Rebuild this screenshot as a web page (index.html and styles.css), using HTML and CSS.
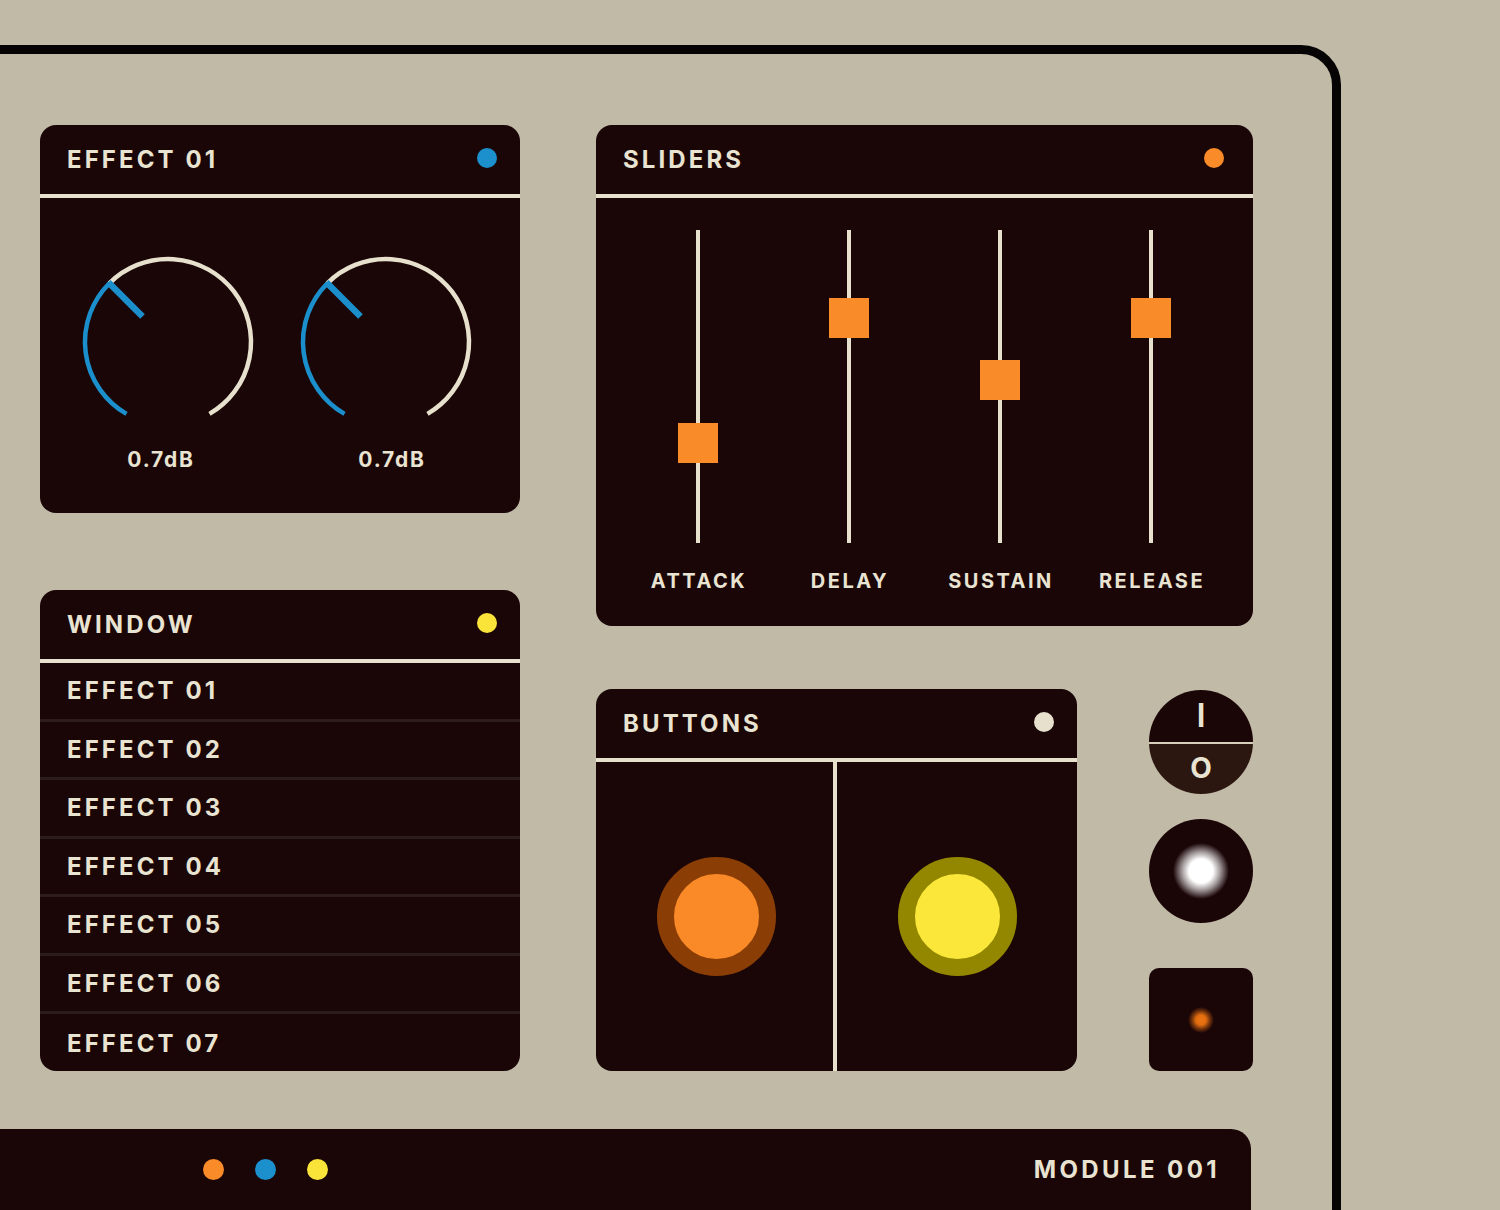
FILE: index.html
```html
<!DOCTYPE html>
<html lang="en">
<head>
<meta charset="utf-8">
<title>Module 001</title>
<link rel="stylesheet" href="styles.css">
</head>
<body>
<div class="frame">
  <div class="board">
    <div class="col col-left">
      <section class="panel panel-effect">
        <header class="panel-head"><h2 class="panel-title">EFFECT 01</h2><span class="dot dot-blue"></span></header>
        <div class="knobs">
          <div class="knob">
            <svg class="knob-svg" width="180" height="180" viewBox="0 0 180 180">
              <path d="M31.31 31.31 A83 83 0 1 1 131.5 161.88" fill="none" stroke="#e6e0cd" stroke-width="4.5"/>
              <path d="M48.5 161.88 A83 83 0 0 1 31.31 31.31" fill="none" stroke="#1a8fcb" stroke-width="4.5"/>
              <line x1="30.3" y1="30.3" x2="64.5" y2="64.5" stroke="#1a8fcb" stroke-width="6.5"/>
            </svg>
            <div class="knob-label label-left">0.7dB</div>
          </div>
          <div class="knob">
            <svg class="knob-svg" width="180" height="180" viewBox="0 0 180 180">
              <path d="M31.31 31.31 A83 83 0 1 1 131.5 161.88" fill="none" stroke="#e6e0cd" stroke-width="4.5"/>
              <path d="M48.5 161.88 A83 83 0 0 1 31.31 31.31" fill="none" stroke="#1a8fcb" stroke-width="4.5"/>
              <line x1="30.3" y1="30.3" x2="64.5" y2="64.5" stroke="#1a8fcb" stroke-width="6.5"/>
            </svg>
            <div class="knob-label label-right">0.7dB</div>
          </div>
        </div>
      </section>
      <section class="panel panel-window">
        <header class="panel-head"><h2 class="panel-title">WINDOW</h2><span class="dot dot-yellow"></span></header>
        <ul class="list">
          <li class="list-item">EFFECT 01</li>
          <li class="list-item">EFFECT 02</li>
          <li class="list-item">EFFECT 03</li>
          <li class="list-item">EFFECT 04</li>
          <li class="list-item">EFFECT 05</li>
          <li class="list-item">EFFECT 06</li>
          <li class="list-item">EFFECT 07</li>
        </ul>
      </section>
    </div>
    <div class="col col-right">
      <section class="panel panel-sliders">
        <header class="panel-head head-sliders"><h2 class="panel-title">SLIDERS</h2><span class="dot dot-orange"></span></header>
        <div class="sliders">
          <div class="slider">
            <div class="track"><span class="thumb" style="top:193px"></span></div>
            <div class="slider-label">ATTACK</div>
          </div>
          <div class="slider">
            <div class="track"><span class="thumb" style="top:68px"></span></div>
            <div class="slider-label">DELAY</div>
          </div>
          <div class="slider">
            <div class="track"><span class="thumb" style="top:130px"></span></div>
            <div class="slider-label">SUSTAIN</div>
          </div>
          <div class="slider">
            <div class="track"><span class="thumb" style="top:68px"></span></div>
            <div class="slider-label">RELEASE</div>
          </div>
        </div>
      </section>
      <div class="lower-row">
        <section class="panel panel-buttons">
          <header class="panel-head"><h2 class="panel-title">BUTTONS</h2><span class="dot dot-cream"></span></header>
          <div class="buttons">
            <div class="btn-cell cell-left"><span class="btn btn-orange"></span></div>
            <div class="btn-divider"></div>
            <div class="btn-cell cell-right"><span class="btn btn-yellow"></span></div>
          </div>
        </section>
        <div class="controls">
          <div class="switch">
            <div class="switch-half switch-on">I</div>
            <div class="switch-half switch-off">O</div>
          </div>
          <div class="glow"></div>
          <div class="led-square"></div>
        </div>
      </div>
    </div>
  </div>
  <footer class="bottombar">
    <div class="bar-dots">
      <span class="dot dot-orange bar-dot"></span>
      <span class="dot dot-blue bar-dot"></span>
      <span class="dot dot-yellow bar-dot"></span>
    </div>
    <div class="bar-title">MODULE 001</div>
  </footer>
</div>
</body>
</html>
```

FILE: styles.css
```css
* { box-sizing: border-box; }
html, body {
  margin: 0;
  padding: 0;
  background: #c0baa7;
  width: 1500px;
  height: 1210px;
  overflow: hidden;
  font-family: Inter, "Noto Sans", "Liberation Sans", sans-serif;
  color: #e9e3d1;
}
.frame {
  margin-top: 45px;
  margin-left: -60px;
  width: 1401px;
  height: 1300px;
  border: 9px solid #050303;
  border-radius: 40px;
}
.board {
  display: flex;
  gap: 76px;
  padding: 71px 0 0 91px;
}
.col { display: flex; flex-direction: column; }
.col-left { width: 480px; gap: 77px; }
.col-right { width: 657px; gap: 63px; }

.panel {
  background: #1a0507;
  border-radius: 16px;
  overflow: hidden;
}
.panel-head {
  height: 73px;
  border-bottom: 4px solid #e6e0cd;
  display: flex;
  align-items: center;
  justify-content: space-between;
  padding: 0 23px 0 27px;
}
.head-sliders { padding-right: 29px; }
.panel-title {
  margin: 0;
  font-size: 24px;
  font-weight: 700;
  letter-spacing: 3.1px;
  line-height: 28px;
}
.dot {
  display: block;
  width: 20px;
  height: 20px;
  border-radius: 50%;
}
.panel-head .dot { margin-bottom: 4px; }
.dot-blue { background: #1b90cd; }
.dot-yellow { background: #fbe43a; }
.dot-orange { background: #f98b28; }
.dot-cream { background: #e6e0cd; }

.panel-effect { height: 388px; }
.knobs {
  display: flex;
  gap: 38px;
  padding: 54px 0 0 38px;
}
.knob { width: 180px; display: flex; flex-direction: column; align-items: center; }
.knob-svg { display: block; }
.knob-label {
  margin-top: 16px;
  font-size: 21px;
  font-weight: 700;
  letter-spacing: 1.8px;
  line-height: 24px;
}
.label-left { padding-right: 14px; }
.label-right { padding-left: 12px; }

.panel-window { height: 481px; }
.list { list-style: none; margin: 0; padding: 0; }
.list-item {
  height: 58.5px;
  border-bottom: 3px solid #2d1c1d;
  display: flex;
  align-items: center;
  padding: 0 27px;
  font-size: 24px;
  font-weight: 700;
  letter-spacing: 3.1px;
}
.list-item:last-child { border-bottom: none; }

.panel-sliders { height: 501px; }
.sliders {
  display: flex;
  padding: 32px 26.5px 0;
}
.slider {
  width: 151px;
  display: flex;
  flex-direction: column;
  align-items: center;
}
.track {
  position: relative;
  width: 4px;
  height: 313px;
  background: #e6e0cd;
}
.thumb {
  position: absolute;
  left: -18px;
  width: 40px;
  height: 40px;
  background: #f98b28;
}
.slider-label {
  margin-top: 26px;
  font-size: 20px;
  font-weight: 700;
  letter-spacing: 2.5px;
  line-height: 24px;
  padding-left: 2px;
}

.lower-row { display: flex; gap: 72px; }
.panel-buttons { width: 481px; height: 382px; display: flex; flex-direction: column; }
.buttons { flex: 1; display: flex; }
.btn-cell { display: flex; align-items: center; justify-content: center; }
.cell-left { width: 237px; padding-left: 3px; }
.cell-right { flex: 1; }
.btn-divider { width: 4px; background: #e6e0cd; }
.btn {
  display: block;
  width: 119px;
  height: 119px;
  border-radius: 50%;
  border: 17px solid;
}
.btn-orange { background: #fa8a28; border-color: #8a3e06; }
.btn-yellow { background: #fbe63a; border-color: #938700; }

.controls { width: 104px; display: flex; flex-direction: column; padding-top: 1px; }
.switch {
  width: 104px;
  height: 104px;
  border-radius: 50%;
  overflow: hidden;
  display: flex;
  flex-direction: column;
}
.switch-half {
  height: 52px;
  display: flex;
  align-items: center;
  justify-content: center;
  color: #e9e3d1;
}
.switch-on { background: #1a0507; font-size: 33px; font-weight: 600; padding-bottom: 2px; }
.switch-off { background: #2b1610; border-top: 2px solid #d8d0bc; font-size: 28px; font-weight: 700; padding-bottom: 2px; }
.glow {
  margin-top: 25px;
  width: 104px;
  height: 104px;
  border-radius: 50%;
  background: radial-gradient(circle at 52px 52px, #ffffff 0, #ffffff 12px, rgba(255,255,255,0.6) 19px, rgba(255,255,255,0) 28px), #1a0507;
}
.led-square {
  margin-top: 45px;
  width: 104px;
  height: 103px;
  border-radius: 10px;
  background: radial-gradient(circle at 52px 52px, #ec7512 0, #e26c10 5px, rgba(226,108,16,0.45) 9px, rgba(226,108,16,0) 13px), #1a0507;
}

.bottombar {
  margin-top: 58px;
  margin-right: 81px;
  height: 120px;
  background: #1a0507;
  border-top-right-radius: 20px;
  display: flex;
  justify-content: space-between;
  align-items: flex-start;
  padding: 0 31px 0 254px;
}
.bar-dots {
  height: 80px;
  display: flex;
  align-items: center;
  gap: 31px;
}
.bar-dot { width: 21px; height: 21px; }
.bar-title {
  height: 80px;
  display: flex;
  align-items: center;
  font-size: 24px;
  font-weight: 700;
  letter-spacing: 3.4px;
}
```
